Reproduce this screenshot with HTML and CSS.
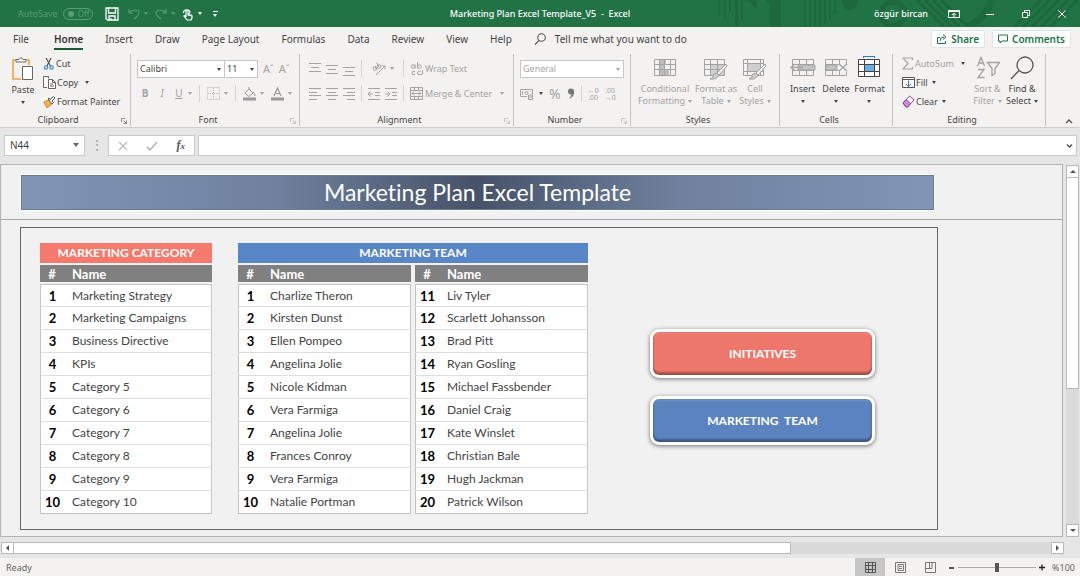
FILE: index.html
```html
<!DOCTYPE html>
<html lang="en">
<head>
<meta charset="utf-8">
<title>Marketing Plan Excel Template_V5 - Excel</title>
<meta name="viewport" content="width=device-width, initial-scale=1">
<link rel="stylesheet" href="styles.css">
</head>
<body>
<header class="titlebar">
  <svg class="titlebar-art" width="370" height="27" viewBox="0 0 370 27" aria-hidden="true">
    <g fill="#1d683d">
      <path d="M8 0h2v16H8zM14 0h2v20h-2zM19 0h2v13h-2zM25 0h3v26h-3zM31 0h2v19h-2zM37 0h10v9z"/>
      <path d="M56 0h15v27H60V6z"/>
      <path d="M94 0h2v27h-2zM99 0h2v27h-2zM104 0h2v27h-2zM109 0h2v27h-2zM114 0h2v24h-2zM119 0h2v20h-2zM124 0h2v14h-2z"/>
      <circle cx="140" cy="2" r="8"/>
    </g>
    <g fill="none" stroke="#1d683d">
      <circle cx="183" cy="14" r="12" stroke-width="5"/>
      <path stroke-width="3" d="M207 0l27 27M215 0l27 27M223 0l27 27M231 0l27 27"/>
      <path stroke-width="7" d="M281 0q-4 18-24 27"/>
      <path stroke-width="3" d="M304 27l27-27M313 27l27-27M322 27l27-27M331 27l27-27M340 27l27-27"/>
    </g>
  </svg>
  <div class="quick">
    <label class="autosave">AutoSave <span class="toggle"><input type="checkbox" disabled>Off</span></label>
    <button class="q-save" aria-label="Save"><svg width="14" height="14" viewBox="0 0 14 14" fill="none" stroke="#fff" stroke-width="1.3"><path d="M1 1h12v12H2.500L1 11.500zM3.500 1v5h7V1M4 13V9h6v4M6 11v2"/></svg></button>
    <button class="q-dim" aria-label="Undo"><svg width="12" height="12" viewBox="0 0 12 12" fill="none" stroke="currentColor" stroke-width="1.200"><path d="M1 1v4h4M1 5c3-4 10-4 10 0 0 3-3 4-5 6"/></svg><i class="caret"></i></button>
    <button class="q-dim" aria-label="Redo"><svg width="12" height="12" viewBox="0 0 12 12" fill="none" stroke="currentColor" stroke-width="1.200"><path d="M11 1v4H7M11 5C8 1 1 1 1 5c0 3 3 4 5 6"/></svg><i class="caret"></i></button>
    <button class="q-touch" aria-label="Touch mode"><svg width="12" height="14" viewBox="0 0 12 14" fill="none" stroke="#fff" stroke-width="1.200"><path d="M1.500 6a3.200 3.200 0 1 1 6.500 0M4 10V4q1-1.500 2 0v4l4 1v2l-1 2H5L2 9q1-1 2 1M7 8V6M9 8V7"/></svg><i class="caret"></i></button>
    <button class="q-more" aria-label="Customize toolbar"><i></i><i class="caret"></i></button>
  </div>
  <div class="doc-title">Marketing Plan Excel Template_V5&nbsp; -&nbsp; Excel</div>
  <div class="window">
    <span class="user">özgür bircan</span>
    <button aria-label="Ribbon display options"><svg width="12" height="10" viewBox="0 0 12 10" fill="none" stroke="#fff"><path d="M.5 1.500h11v7H.5z"/><path d="M1 2h10" stroke-width="2"/><path d="M6 8V4M4 6l2-2 2 2"/></svg></button>
    <button aria-label="Minimize"><svg width="10" height="10" viewBox="0 0 10 10" stroke="#fff"><path d="M1 5.500h8"/></svg></button>
    <button aria-label="Restore"><svg width="10" height="10" viewBox="0 0 10 10" fill="none" stroke="#fff"><path d="M1.500 3.500h5v5h-5zM3.500 3V1.500h5v5H7"/></svg></button>
    <button aria-label="Close"><svg width="10" height="10" viewBox="0 0 10 10" stroke="#fff"><path d="M1 1l8 8M9 1L1 9"/></svg></button>
  </div>
</header>

<nav class="tabs">
  <a href="#file" class="file">File</a><a href="#home" class="active">Home</a><a href="#insert">Insert</a><a href="#draw">Draw</a><a href="#layout">Page Layout</a><a href="#formulas">Formulas</a><a href="#data">Data</a><a href="#review">Review</a><a href="#view">View</a><a href="#help">Help</a>
  <button class="tell"><svg width="12" height="12" viewBox="0 0 12 12" fill="none" stroke="#555" stroke-width="1.100"><circle cx="7.500" cy="4.500" r="3.800"/><path d="M5 7.500L1 11.500"/></svg>Tell me what you want to do</button>
  <span class="tab-actions">
    <button><svg width="10" height="10" viewBox="0 0 10 10" fill="none" stroke="#217346"><path d="M3 3.500H.5v6h8V7M3 7q0-4 4-4M6 .5L9 3 6 5.500"/></svg>Share</button>
    <button><svg width="10" height="10" viewBox="0 0 10 10" fill="none" stroke="#217346"><path d="M.5 1h9v6H4L2 9V7H.5z"/></svg>Comments</button>
  </span>
</nav>

<section class="ribbon" aria-label="Home ribbon">
  <div class="group">
    <div class="group-body clip">
      <button class="big"><svg width="24" height="24" viewBox="0 0 24 24" fill="none"><path d="M5 3H2v19h8M15 3h3v5" stroke="#f0a33f" stroke-width="1.600"/><path d="M5 5V2.500h3Q10-1 12 2.500h3V5z" fill="#fff" stroke="#666"/><path d="M11.500 9.500h10v13h-10z" fill="#fff" stroke="#666"/></svg>Paste<i class="caret"></i></button>
      <div class="stack">
        <button><svg width="12" height="12" viewBox="0 0 12 12" fill="none" stroke="#555" stroke-width="1.200"><path d="M3 0l4.500 8M8 0L4 8"/><circle cx="3" cy="9.500" r="1.700" stroke="#3c8bd0"/><circle cx="8.500" cy="9.500" r="1.700" stroke="#3c8bd0"/></svg>Cut</button>
        <button><svg width="13" height="13" viewBox="0 0 13 13" fill="#fff" stroke="#666"><path d="M4 11.500H.5V.5h5v2"/><path d="M5.500 3.500h4l3 3v6h-7zM9.500 3.500v3h3M7 8h3M7 10h4" /></svg>Copy<i class="caret far"></i></button>
        <button><svg width="13" height="12" viewBox="0 0 13 12"><path d="M1 6l5-2 3 4-5 4z" fill="#f6b05c" stroke="#d98322"/><path d="M5 3l4 5 1.500-1.500L9 5l3-3-1.500-1.500-3.500 3L6 2z" fill="#fff" stroke="#555"/></svg>Format Painter</button>
      </div>
    </div>
    <div class="group-name">Clipboard<svg class="launch" viewBox="0 0 7 7"><path d="M.5 5V.5H5M3 3l3 3M6.500 3v3.500H3"/></svg></div>
  </div>

  <div class="group">
    <div class="group-body rows">
      <div class="row fonts">
        <span class="combo face"><select aria-label="Font"><option>Calibri</option></select><i class="caret"></i></span><span class="combo size"><select aria-label="Font size"><option>11</option></select><i class="caret"></i></span>
        <button class="dim grow" aria-label="Increase font size">A<sup>ˆ</sup></button><button class="dim grow" aria-label="Decrease font size">A<sup>ˇ</sup></button>
      </div>
      <div class="row format dim">
        <button><b>B</b></button><button><em>I</em></button><button><u>U</u><i class="caret"></i></button>
        <i class="rule"></i>
        <button aria-label="Borders"><svg width="13" height="13" viewBox="0 0 13 13" fill="none" stroke="#bbb"><path d="M.5.5h12v12H.5zM6.500 1v11M1 6.500h11" stroke-dasharray="1 1"/></svg><i class="caret"></i></button>
        <i class="rule"></i>
        <button aria-label="Fill color"><svg width="13" height="14" viewBox="0 0 13 14" fill="none" stroke="#999"><path d="M2 6l4-4 4 4-4 3.500zM6 2V0M10 5q2 1 2 4"/><path d="M0 12h13" stroke-width="3"/></svg><i class="caret"></i></button>
        <button aria-label="Font color"><svg width="13" height="14" viewBox="0 0 13 14" fill="none" stroke="#999"><path d="M3 9L6.500 1 10 9M4 6.500h5" stroke-width="1.200"/><path d="M0 12h13" stroke-width="3"/></svg><i class="caret"></i></button>
      </div>
    </div>
    <div class="group-name">Font<svg class="launch pale" viewBox="0 0 7 7"><path d="M.5 5V.5H5M3 3l3 3M6.500 3v3.500H3"/></svg></div>
  </div>

  <div class="group">
    <div class="group-body rows align">
      <div class="row dim">
        <button aria-label="Top align"><svg width="12" height="14" viewBox="0 0 12 14" class="ln"><path d="M0 1.500h12M2 5.500h8M0 9.500h12"/></svg></button>
        <button aria-label="Middle align"><svg width="12" height="14" viewBox="0 0 12 14" class="ln"><path d="M0 3.500h12M2 7.500h8M0 11.500h12"/></svg></button>
        <button aria-label="Bottom align"><svg width="12" height="14" viewBox="0 0 12 14" class="ln"><path d="M0 5.500h12M2 9.500h8M0 13.500h12"/></svg></button>
        <i class="rule"></i>
        <button class="orient" aria-label="Orientation"><svg width="14" height="14" viewBox="0 0 14 14" class="ln"><path d="M4 13L13 4M9.500 4H13v3.500"/><circle cx="3" cy="6.500" r="1.800"/><circle cx="7" cy="4.500" r="1.800"/><path d="M3 4l2 4M4.500 0.500L7 5"/></svg><i class="caret"></i></button>
        <i class="rule"></i>
        <button class="wide"><svg width="13" height="14" viewBox="0 0 13 14" class="ln"><circle cx="3" cy="4.500" r="1.800"/><path d="M5 2.500v4M7.500 0v6.500M5 9.500q-3-1-3 1.500t3 1.500M10.500 9.500q-3-1-3 1.500t3 1.500M12.500 8v4l-2 1"/><circle cx="9.500" cy="4.500" r="1.800"/></svg>Wrap Text</button>
      </div>
      <div class="row dim">
        <button aria-label="Align left"><svg width="12" height="14" viewBox="0 0 12 14" class="ln"><path d="M0 1.500h12M0 5.500h8M0 8.500h12M0 12.500h8"/></svg></button>
        <button aria-label="Center"><svg width="12" height="14" viewBox="0 0 12 14" class="ln"><path d="M0 1.500h12M2 5.500h8M0 8.500h12M2 12.500h8"/></svg></button>
        <button aria-label="Align right"><svg width="12" height="14" viewBox="0 0 12 14" class="ln"><path d="M0 1.500h12M4 5.500h8M0 8.500h12M4 12.500h8"/></svg></button>
        <i class="rule"></i>
        <button aria-label="Decrease indent"><svg width="12" height="12" viewBox="0 0 12 12" class="ln"><path d="M0 .5h12M7 4.500h5M7 7.500h5M0 11.500h12M5 6H0M2.500 3.500L0 6l2.500 2.500"/></svg></button>
        <button aria-label="Increase indent"><svg width="12" height="12" viewBox="0 0 12 12" class="ln"><path d="M0 .5h12M7 4.500h5M7 7.500h5M0 11.500h12M0 6h5M2.500 3.500L5 6 2.500 8.500"/></svg></button>
        <i class="rule"></i>
        <button class="wide"><svg width="13" height="13" viewBox="0 0 13 13" class="ln"><path d="M.5.5h12v12H.5zM.5 3.500h12M.5 9.500h12M4.500.5v3M8.500.5v3M4.500 9.500v3M8.500 9.500v3M2 6.500h9M4 4.500l-2 2 2 2M9 4.500l2 2-2 2"/></svg>Merge &amp; Center<i class="caret far"></i></button>
      </div>
    </div>
    <div class="group-name">Alignment<svg class="launch pale" viewBox="0 0 7 7"><path d="M.5 5V.5H5M3 3l3 3M6.500 3v3.500H3"/></svg></div>
  </div>

  <div class="group">
    <div class="group-body rows number">
      <div class="row"><span class="combo general dim"><select aria-label="Number format"><option>General</option></select><i class="caret"></i></span></div>
      <div class="row dim">
        <button aria-label="Accounting format"><svg width="14" height="12" viewBox="0 0 14 12" class="ln"><path d="M.5 1.500h12v5M7 8.500H.5v-7M3 3.500h-.500v3H3M10 3.500h.500M5 5a1.500 1.500 0 1 0 3 0 1.500 1.500 0 1 0-3 0M8.500 7h4v4.500h-4zM8.500 9h4"/></svg><i class="caret dark"></i></button>
        <button class="pct">%</button>
        <button aria-label="Comma style"><svg width="8" height="12" viewBox="0 0 8 12"><circle cx="4" cy="3.500" r="3" fill="#777"/><path d="M7 3q1 5-5 8 3-3 2.500-6z" fill="#777"/></svg></button>
        <i class="rule"></i>
        <button class="dec" aria-label="Increase decimal"><span>←0</span><span>.00</span></button>
        <button class="dec" aria-label="Decrease decimal"><span>.00</span><span>→0</span></button>
      </div>
    </div>
    <div class="group-name">Number<svg class="launch pale" viewBox="0 0 7 7"><path d="M.5 5V.5H5M3 3l3 3M6.500 3v3.500H3"/></svg></div>
  </div>

  <div class="group">
    <div class="group-body bigs styles dim">
      <button class="big"><svg width="24" height="24" viewBox="0 0 24 24" class="ln"><path d="M6 3h7v5H6zM6 13h10v6H6zM6 8h5v5H6z" fill="#bdbdbd" stroke="none"/><path d="M1.500 3.500h21v16h-21zM1.500 8.500h21M1.500 13.500h21M6.500 3.500v16M11.500 3.500v16M17.500 3.500v16"/></svg><span>Conditional<br>Formatting<i class="caret"></i></span></button>
      <button class="big"><svg width="24" height="24" viewBox="0 0 24 24" class="ln"><path d="M6 8h15v11H6z" fill="#cfcfcf" stroke="none"/><path d="M.5 3.500h20v16H.5zM.5 8.500h20M.5 13.500h20M6.500 3.500v16M13.500 3.500v16"/><path d="M22 8l-9 9 2 2 8-9z" fill="#f3f3f3"/><path d="M12 17q-3 0-3 4l-3 2q7 1 9-4z" fill="#ccc"/></svg><span>Format as<br>Table<i class="caret"></i></span></button>
      <button class="big"><svg width="24" height="24" viewBox="0 0 24 24" class="ln"><path d="M4 7h13v9H4z" fill="#cfcfcf" stroke="none"/><path d="M.5 3.500h20v16H.5zM.5 7.500h20M.5 15.500h20M4.500 3.500v16M17.500 3.500v16"/><path d="M22 8l-9 9 2 2 8-9z" fill="#f3f3f3"/><path d="M12 17q-3 0-3 4l-3 2q7 1 9-4z" fill="#ccc"/></svg><span>Cell<br>Styles<i class="caret"></i></span></button>
    </div>
    <div class="group-name">Styles</div>
  </div>

  <div class="group">
    <div class="group-body bigs cells">
      <button class="big"><svg width="26" height="24" viewBox="0 0 26 24" class="ln"><path d="M2.500 3.500h21v16h-21zM2.500 8.500h21M2.500 14.500h21M9.500 3.500v16M16.500 3.500v16"/><path d="M8 9h17v5H8z" fill="#c4c4c4"/><path d="M1 11.500h12M5 8l-4 3.500L5 15" stroke-width="1.300"/></svg>Insert<i class="caret"></i></button>
      <button class="big"><svg width="26" height="24" viewBox="0 0 26 24" class="ln"><path d="M2.500 3.500h21v5M2.500 3.500v16h21v-4M2.500 8.500h13M2.500 14.500h13M9.500 3.500v16M16.500 3.500v5M16.500 15v4"/><path d="M3 9h11v5H3z" fill="#c4c4c4"/><path d="M16 8l8 7M24 8l-8 7" stroke-width="1.300"/></svg>Delete<i class="caret"></i></button>
      <button class="big"><svg width="26" height="24" viewBox="0 0 26 24" fill="none" stroke="#444"><path d="M2.500 3.500h21v17h-21z" fill="#fff"/><path d="M8 9h10v6H8z" fill="#69afe5" stroke="none"/><path d="M2.500 8.500h21M2.500 15.500h21M8.500 3.500v17M18.500 3.500v17"/><path d="M7 .5h12M7.500 0v2M18.500 0v2" stroke="#2b7cc4"/></svg>Format<i class="caret"></i></button>
    </div>
    <div class="group-name">Cells</div>
  </div>

  <div class="group">
    <div class="group-body editing">
      <div class="stack">
        <button class="dim"><svg width="12" height="13" viewBox="0 0 12 13" class="ln"><path d="M10.500 3V1H1l5 5.500L1 12h9.500v-2" stroke-width="1.200"/></svg>AutoSum<i class="caret dark far"></i></button>
        <button><svg width="13" height="13" viewBox="0 0 13 13" fill="#fff" stroke="#555"><path d="M.5 1.500h12v10H.5zM.5 3.500h12"/><path d="M6.500 4.500v6M4 8l2.500 2.500L9 8" fill="none" stroke="#2b7cc4"/></svg>Fill<i class="caret near"></i></button>
        <button><svg width="13" height="13" viewBox="0 0 13 13" stroke="#8f3fa0"><path d="M1 8l6.500-7L12 5l-6.500 7H4z" fill="#fff"/><path d="M1 8l3-3.500 4.500 4L5.500 12H4z" fill="#cf8ad8"/></svg>Clear<i class="caret near"></i></button>
      </div>
      <button class="big dim"><svg width="24" height="24" viewBox="0 0 24 24" class="ln"><path d="M1.500 10L5 1.500 8.500 10M2.500 7h5M2 13.500h6L2 21.500h6.500M11.500 6.500h12l-4.500 6v5l-3 2v-7z" stroke-width="1.300"/></svg><span>Sort &amp;<br>Filter<i class="caret"></i></span></button>
      <button class="big"><svg width="24" height="24" viewBox="0 0 24 24" fill="none" stroke="#555" stroke-width="1.300"><circle cx="15" cy="9" r="8"/><path d="M9 14.500L1 23"/></svg><span>Find &amp;<br>Select<i class="caret"></i></span></button>
    </div>
    <div class="group-name">Editing</div>
  </div>
  <button class="collapse" aria-label="Collapse ribbon"><svg width="8" height="6" viewBox="0 0 8 6" fill="none" stroke="#555" stroke-width="1.300"><path d="M1 5l3-3 3 3"/></svg></button>
</section>

<div class="formula">
  <span class="combo namebox"><select aria-label="Name box"><option>N44</option></select><i class="caret"></i></span>
  <span class="dots" aria-hidden="true">⋮</span>
  <span class="fx">
    <button aria-label="Cancel"><svg width="10" height="10" viewBox="0 0 10 10" stroke="#bbb" stroke-width="1.300"><path d="M1 1l8 8M9 1L1 9"/></svg></button>
    <button aria-label="Enter"><svg width="12" height="10" viewBox="0 0 12 10" fill="none" stroke="#bbb" stroke-width="1.800"><path d="M1 5.500L4 9l7-8"/></svg></button>
    <button class="fn" aria-label="Insert function">f<small>x</small></button>
  </span>
  <span class="entry"><input type="text" aria-label="Formula"><svg width="7" height="6" viewBox="0 0 7 6" fill="none" stroke="#555" stroke-width="1.500"><path d="M1 1.500L3.500 4 6 1.500"/></svg></span>
</div>

<main class="workspace">
  <div class="sheet">
    <div class="sheet-head"><h1>Marketing Plan Excel Template</h1></div>
    <div class="frame">
      <section class="category">
        <h2 class="red">MARKETING CATEGORY</h2>
        <table>
          <thead><tr><th>#</th><th>Name</th></tr></thead>
          <tbody>
            <tr><td>1</td><td>Marketing Strategy</td></tr>
            <tr><td>2</td><td>Marketing Campaigns</td></tr>
            <tr><td>3</td><td>Business Directive</td></tr>
            <tr><td>4</td><td>KPIs</td></tr>
            <tr><td>5</td><td>Category 5</td></tr>
            <tr><td>6</td><td>Category 6</td></tr>
            <tr><td>7</td><td>Category 7</td></tr>
            <tr><td>8</td><td>Category 8</td></tr>
            <tr><td>9</td><td>Category 9</td></tr>
            <tr><td>10</td><td>Category 10</td></tr>
          </tbody>
        </table>
      </section>
      <section class="team">
        <h2 class="blue">MARKETING TEAM</h2>
        <div class="pair">
          <table>
            <thead><tr><th>#</th><th>Name</th></tr></thead>
            <tbody>
              <tr><td>1</td><td>Charlize Theron</td></tr>
              <tr><td>2</td><td>Kirsten Dunst</td></tr>
              <tr><td>3</td><td>Ellen Pompeo</td></tr>
              <tr><td>4</td><td>Angelina Jolie</td></tr>
              <tr><td>5</td><td>Nicole Kidman</td></tr>
              <tr><td>6</td><td>Vera Farmiga</td></tr>
              <tr><td>7</td><td>Angelina Jolie</td></tr>
              <tr><td>8</td><td>Frances Conroy</td></tr>
              <tr><td>9</td><td>Vera Farmiga</td></tr>
              <tr><td>10</td><td>Natalie Portman</td></tr>
            </tbody>
          </table>
          <table>
            <thead><tr><th>#</th><th>Name</th></tr></thead>
            <tbody>
              <tr><td>11</td><td>Liv Tyler</td></tr>
              <tr><td>12</td><td>Scarlett Johansson</td></tr>
              <tr><td>13</td><td>Brad Pitt</td></tr>
              <tr><td>14</td><td>Ryan Gosling</td></tr>
              <tr><td>15</td><td>Michael Fassbender</td></tr>
              <tr><td>16</td><td>Daniel Craig</td></tr>
              <tr><td>17</td><td>Kate Winslet</td></tr>
              <tr><td>18</td><td>Christian Bale</td></tr>
              <tr><td>19</td><td>Hugh Jackman</td></tr>
              <tr><td>20</td><td>Patrick Wilson</td></tr>
            </tbody>
          </table>
        </div>
      </section>
      <div class="links">
        <button class="red">INITIATIVES</button>
        <button class="blue">MARKETING&nbsp; TEAM</button>
      </div>
    </div>
  </div>
  <div class="vscroll"><button class="arrow" aria-label="Scroll up"><i class="up"></i></button><div class="thumb"></div><div class="rest"></div><button class="arrow" aria-label="Scroll down"><i class="down"></i></button></div>
</main>
<div class="hscroll"><button class="arrow" aria-label="Scroll left"><i class="left"></i></button><div class="thumb"></div><div class="rest"></div><button class="arrow" aria-label="Scroll right"><i class="right"></i></button></div>

<footer class="status">
  <span class="ready">Ready</span>
  <button class="on" aria-label="Normal view"><svg width="11" height="11" viewBox="0 0 11 11" fill="none" stroke="#555"><path d="M.5.5h10v10H.5zM.5 3.500h10M.5 7.500h10M3.500.5v10M7.500.5v10"/></svg></button>
  <button aria-label="Page layout view"><svg width="11" height="11" viewBox="0 0 11 11" fill="none" stroke="#777"><path d="M.5.5h10v10H.5zM3 2.500h5.500v6H3zM4 4.500h3M4 6.500h3"/></svg></button>
  <button aria-label="Page break view"><svg width="11" height="11" viewBox="0 0 11 11" fill="none" stroke="#777"><path d="M.5.5h10v10H.5zM4.500.5v6M.5 6.500h6.500V.5"/></svg></button>
  <button class="zoom-step out" aria-label="Zoom out"><svg width="6" height="7" viewBox="0 0 6 7" stroke="#222" stroke-width="1.500"><path d="M0 4h5"/></svg></button>
  <input class="zoom" type="range" aria-label="Zoom" value="50">
  <button class="zoom-step" aria-label="Zoom in"><svg width="6" height="7" viewBox="0 0 6 7" stroke="#222" stroke-width="1.300"><path d="M0 3.500h6M3 .5v6"/></svg></button>
  <span class="percent">%100</span>
</footer>
</body>
</html>
```

FILE: styles.css
```css
* { box-sizing: border-box; }
body {
  margin: 0;
  min-height: 100vh;
  display: flex;
  flex-direction: column;
  background: #e6e6e6;
  color: #444;
  font: 9px/13px "Noto Sans", "Open Sans", sans-serif;
}
button, select, input { font: inherit; color: inherit; }
button { border: 0; padding: 0; background: none; display: flex; align-items: center; justify-content: center; white-space: nowrap; }
svg { flex: none; display: block; }
.ln { fill: none; stroke: #a3a3a3; }
.dim { color: #a3a3a3; }
.caret {
  display: inline-block;
  flex: none;
  width: 0;
  border: 2px solid transparent;
  border-top: 3px solid currentColor;
  border-bottom: 0;
  margin-left: 5px;
  vertical-align: middle;
}
.caret.dark { color: #444; }
.caret.far { margin-left: 6px; }
.caret.near { margin-left: 3px; }

/* Title bar */
.titlebar {
  position: relative;
  height: 27px;
  display: grid;
  grid-template-columns: 1fr auto 1fr;
  align-items: center;
  background: #217346;
  color: #fff;
}
.titlebar-art { position: absolute; top: 0; right: 0; }
.quick { display: flex; align-items: center; padding-left: 18px; gap: 7px; }
.autosave { display: flex; align-items: center; gap: 5px; color: #589b76; }
.toggle { display: flex; align-items: center; gap: 4px; width: 30px; height: 12px; padding-left: 4px; border: 1px solid #589b76; border-radius: 6px; font-size: 8px; line-height: 10px; }
.toggle input { appearance: none; margin: 0; width: 6px; height: 6px; border-radius: 3px; background: #589b76; }
.q-save { margin: 0 2px 0 5px; }
.q-dim { color: #589b76; }
.quick .caret { margin-left: 4px; }
.q-more { flex-direction: column; gap: 2px; margin-left: 4px; }
.q-more i:first-child { width: 5px; height: 1px; background: #fff; }
.quick .q-more .caret { margin: 0; }
.doc-title, .user { position: relative; font-weight: 500; line-height: 26px; }
.window { position: relative; display: flex; justify-content: flex-end; align-items: center; }
.user { margin-right: 8px; }
.window button { width: 36px; height: 27px; }

/* Tabs */
.tabs { display: flex; align-items: center; gap: 22px; height: 25px; padding: 0 9px 1px 13px; background: #f3f2f1; font-size: 10px; }
.tabs a { color: #444; text-decoration: none; line-height: 18px; height: 18px; }
.tabs .file { margin-right: 3px; }
.tabs .active { font-weight: 600; color: #333; box-shadow: 0 2px #185c37; }
.tell { gap: 9px; }
.tab-actions { display: flex; gap: 7px; margin-left: auto; }
.tab-actions button { gap: 4px; height: 18px; padding: 0 5px; background: #fff; border: 1px solid #e3e3e3; border-radius: 2px; color: #217346; font-weight: 600; }

/* Ribbon */
.ribbon {
  display: grid;
  grid-template-columns: 131px 169px 214px 117px 149px 113px 153px 1fr;
  height: 76px;
  background: #f3f2f1;
  border-bottom: 1px solid #cfcfcf;
}
.group { display: flex; flex-direction: column; margin: 2px 0; border-right: 1px solid #c3c3c3; }
.group-body { height: 60px; }
.group-name { position: relative; text-align: center; line-height: 12px; padding-right: 14px; }
.launch { position: absolute; right: 3px; top: 4px; width: 6px; height: 6px; fill: none; stroke: #777; }
.launch.pale { stroke: #bbb; }
.big { flex-direction: column; justify-content: flex-start; line-height: 12px; }
.big svg { margin-bottom: 3px; }
.big .caret { margin-left: 3px; }
.big > .caret { margin: 5px 0 0; }
.stack { display: flex; flex-direction: column; align-items: flex-start; }
.stack button { height: 19px; gap: 1px; }
.clip { display: flex; padding-left: 11px; gap: 8px; }
.clip .big { padding-top: 3px; }
.rows { display: flex; flex-direction: column; gap: 6px; padding: 5px 0 0 6px; }
.row { display: flex; align-items: center; height: 19px; }
.combo { position: relative; display: flex; }
.combo select { appearance: none; width: 100%; height: 18px; margin: 0; padding: 0 2px; border: 1px solid #c6c6c6; border-radius: 0; background: #fff; opacity: 1; }
.combo .caret { position: absolute; right: 4px; top: 8px; pointer-events: none; }
.face { width: 88px; }
.size { width: 34px; margin-left: -1px; }
.grow { margin-left: 5px; font-size: 11px; }
.grow sup { font-size: 9px; line-height: 8px; }
.format { gap: 7px; padding-left: 3px; }
.format .caret { margin-left: 4px; }
.format b, .format em, .format u { width: 10px; font-size: 10px; text-align: center; }
.rule { flex: none; width: 1px; height: 17px; background: #d5d5d5; }
.align { padding-left: 9px; }
.align .row { gap: 5px; }
.align .rule { margin: 0 1px; }
.orient { width: 29px; }
.orient .caret { margin-left: 4px; }
.wide { gap: 2px; }
.number { padding-left: 6px; }
.number .row { gap: 6px; }
.general { width: 104px; }
.pct { font-size: 14px; }
.dec { flex-direction: column; font-size: 7px; line-height: 7px; }
.bigs { display: grid; justify-items: center; padding-top: 2px; }
.styles { grid-template-columns: 60px 42px 36px; padding-left: 4px; }
.cells { grid-template-columns: 33px 34px 33px; padding-left: 6px; }
.editing { display: grid; grid-template-columns: 67px 37px 32px; padding-left: 9px; }
.editing .big { padding-top: 2px; }
.collapse { align-self: end; justify-self: end; padding: 0 7px 4px; }

/* Formula bar */
.formula { display: flex; align-items: flex-start; height: 36px; padding: 7px 3px 0 4px; }
.namebox { width: 81px; font-size: 10px; }
.namebox select, .fx, .entry { height: 21px; border: 1px solid #cbcbcb; background: #fff; }
.namebox select { padding-left: 5px; }
.namebox .caret { right: 6px; top: 8px; border-width: 4px 3px 0; color: #666; }
.dots { width: 23px; text-align: center; line-height: 20px; font-size: 12px; color: #999; }
.fx { display: flex; width: 87px; justify-content: space-around; }
.fn { font: italic bold 12px "Liberation Serif", serif; color: #555; }
.fn small { font-size: 9px; }
.entry { flex: 1; display: flex; align-items: center; margin-left: 3px; padding-right: 3px; }
.entry input { flex: 1; min-width: 0; border: 0; background: none; height: 19px; }

/* Sheet */
.workspace { flex: 1; display: flex; gap: 3px; padding-right: 1px; }
.sheet { flex: 1; border: 1px solid #b4b4b4; background: #f1f1f1; font-family: Lato, "Noto Sans", sans-serif; font-variant-ligatures: none; }
.sheet-head { padding: 9px 127px 8px 19px; border-bottom: 1px solid #a6a6a6; }
h1 { margin: 0; border: 1px solid #fff; height: 37px; background: linear-gradient(90deg, #8195b8, #6f819e 28%, #465268 50%, #6f819e 72%, #8195b8); color: #fff; font-size: 23px; line-height: 34px; font-weight: 400; text-align: center; box-shadow: inset 0 0 0 1px #6b7a93; }
.frame { display: grid; grid-template-columns: 172px 350px 1fr; column-gap: 26px; margin: 7px 124px 6px 19px; padding: 15px 0 15px 19px; border: 1px solid #666; }
h2 { margin: 0 0 2px; height: 20px; font-size: 12px; line-height: 20px; font-weight: 700; text-align: center; color: #fff; }
h2.red { background: #f5796c; }
h2.blue { background: #5986c6; }
.pair { display: grid; grid-template-columns: 1fr 1fr; gap: 4px; }
table { width: 100%; border-collapse: separate; border-spacing: 0; table-layout: fixed; font-size: 12px; line-height: 14px; }
th, td { padding: 0; text-align: left; }
th { height: 19px; background: #808080; border-bottom: 2px solid #f1f1f1; color: #fff; font-size: 13px; }
th:first-child, td:first-child { width: 24px; text-align: center; }
th + th, td + td { padding-left: 8px; }
td { height: 23px; background: #fff; border-bottom: 1px solid #dedede; color: #444; }
td:first-child { border-left: 1px solid #c4c4c4; color: #000; font-weight: 700; font-size: 13px; }
td:last-child { border-right: 1px solid #c4c4c4; }
tr:first-child td { border-top: 1px solid #c4c4c4; }
tr:last-child td { border-bottom-color: #c4c4c4; }
.links { display: flex; flex-direction: column; align-items: center; gap: 18px; padding: 86px 26px 0 0; }
.links button { width: 225px; height: 49px; border: 3px solid #fff; border-radius: 9px; color: #fff; font-size: 12px; font-weight: 700; box-shadow: 0 1px 4px rgba(0, 0, 0, .55), inset 0 -3px 2px rgba(0, 0, 0, .3), inset 0 2px 2px rgba(255, 255, 255, .12), inset 0 0 2px rgba(0, 0, 0, .3); }
.links .red { background: #ee776c; }
.links .blue { background: #5b83c0; }

/* Scroll bars */
.vscroll { display: flex; flex-direction: column; width: 13px; padding-top: 1px; }
.hscroll { display: flex; height: 12px; margin: 5px 16px 4px 1px; }
.arrow, .thumb { background: #fff; border: 1px solid #b9b9b9; }
.rest { background: #dadada; }
.arrow { flex: none; width: 13px; height: 13px; }
.hscroll .arrow { height: 12px; }
.vscroll .thumb { flex: 211; margin-top: -1px; }
.vscroll .rest { flex: 135; }
.hscroll .thumb { flex: 777; margin-left: -1px; }
.hscroll .rest { flex: 261; }
.arrow i { border: 3px solid transparent; }
.arrow .up { border-top: 0; border-bottom-color: #555; }
.arrow .down { border-bottom: 0; border-top-color: #555; }
.arrow .left { border-left: 0; border-right-color: #555; }
.arrow .right { border-right: 0; border-left-color: #555; }

/* Status bar */
.status { display: flex; align-items: center; height: 18px; padding: 0 5px 0 6px; background: #f3f2f1; color: #666; }
.ready { margin-right: auto; }
.status button { width: 30px; height: 18px; }
.status .on { background: #c6c6c6; }
.status .zoom-step { width: 8px; }
.status .out { margin-left: 3px; }
.zoom { appearance: none; width: 78px; height: 12px; margin: 0 2px; background: linear-gradient(#aaa, #aaa) center / 100% 1px no-repeat; }
.zoom::-webkit-slider-thumb { appearance: none; width: 4px; height: 9px; background: #555; }
.percent { margin-left: 6px; }
```
